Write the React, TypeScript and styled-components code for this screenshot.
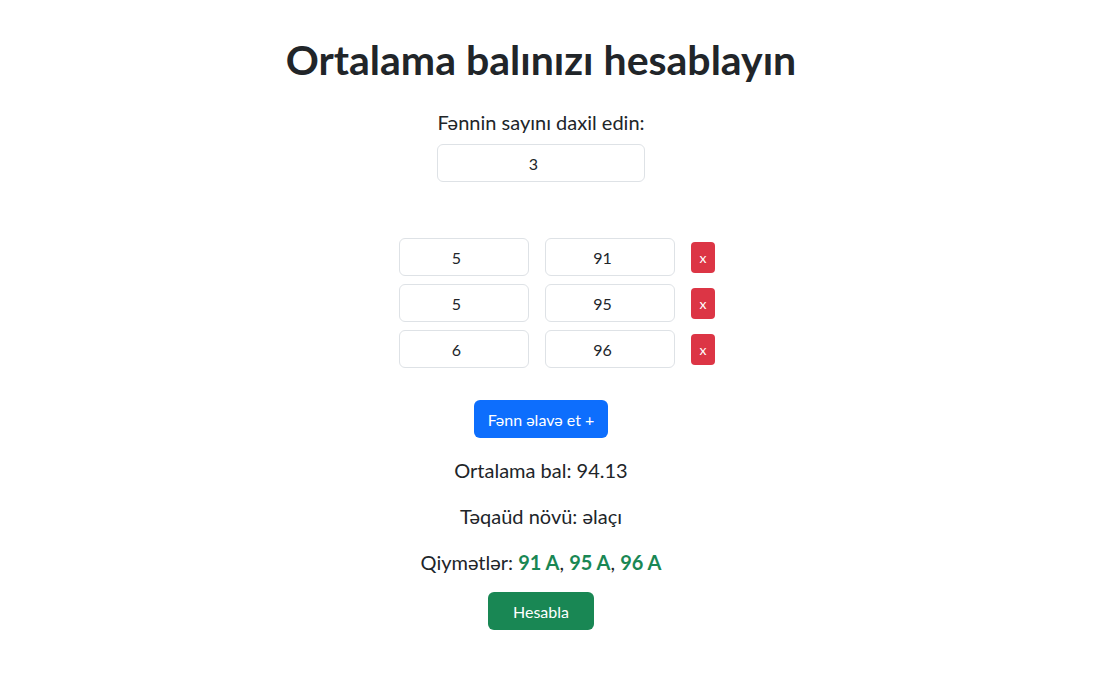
import React, { useState } from "react";
import styled, { createGlobalStyle } from "styled-components";

const GlobalStyle = createGlobalStyle`
  html, body {
    margin: 0;
    padding: 0;
    background: #ffffff;
  }
  body {
    font-family: Lato, "Liberation Sans", sans-serif;
    color: #212529;
  }
  * { box-sizing: border-box; }
`;

const Page = styled.main`
  width: 1082px;
  display: flex;
  flex-direction: column;
  align-items: center;
  padding-top: 35px;
  padding-bottom: 40px;
`;

const Title = styled.h1`
  font-size: 41px;
  line-height: 1.2;
  font-weight: 700;
  margin: 0 0 23px;
  color: #212529;
`;

const Label = styled.label`
  font-size: 20px;
  line-height: 30px;
  margin: 0 0 7px;
`;

const Field = styled.input<{ $w: number }>`
  width: ${(p) => p.$w}px;
  height: 38px;
  border: 1px solid #dee2e6;
  border-radius: 6px;
  background: #fff;
  text-align: center;
  font-family: inherit;
  font-size: 16px;
  color: #212529;
  padding: 6px 12px;
  outline: none;
`;

const Rows = styled.div`
  margin-top: 56px;
  display: flex;
  flex-direction: column;
  gap: 8px;
  padding-left: 32px;
`;

const Row = styled.div`
  display: flex;
  align-items: center;
  gap: 16px;
`;

const Button = styled.button<{ $bg: string; $w: number; $h: number; $fs: number; $r: number }>`
  width: ${(p) => p.$w}px;
  height: ${(p) => p.$h}px;
  background: ${(p) => p.$bg};
  border: none;
  border-radius: ${(p) => p.$r}px;
  color: #fff;
  font-family: inherit;
  font-size: ${(p) => p.$fs}px;
  padding: 0;
  display: inline-flex;
  align-items: center;
  justify-content: center;
  cursor: pointer;
`;

const AddWrap = styled.div`
  margin: 32px 0 17px;
`;

const Info = styled.p`
  font-size: 20px;
  line-height: 30px;
  margin: 0 0 16px;
`;

const Grade = styled.strong`
  color: #198754;
  font-weight: 700;
`;

const CalcWrap = styled.div`
  margin-top: -1px;
`;

type Subject = { credit: string; score: string };

export default function App() {
  const [count, setCount] = useState("3");
  const [subjects, setSubjects] = useState<Subject[]>([
    { credit: "5", score: "91" },
    { credit: "5", score: "95" },
    { credit: "6", score: "96" },
  ]);

  const update = (i: number, key: keyof Subject, v: string) =>
    setSubjects((s) => s.map((x, j) => (j === i ? { ...x, [key]: v } : x)));

  return (
    <>
      <GlobalStyle />
      <Page>
        <Title>Ortalama balınızı hesablayın</Title>
        <Label htmlFor="count">Fənnin sayını daxil edin:</Label>
        <Field id="count" type="number" $w={208} value={count} onChange={(e) => setCount(e.target.value)} />
        <Rows>
          {subjects.map((s, i) => (
            <Row key={i}>
              <Field type="number" $w={130} value={s.credit} onChange={(e) => update(i, "credit", e.target.value)} />
              <Field type="number" $w={130} value={s.score} onChange={(e) => update(i, "score", e.target.value)} />
              <Button $bg="#dc3545" $w={24} $h={31} $fs={14} $r={4}
                onClick={() => setSubjects((all) => all.filter((_, j) => j !== i))}>
                x
              </Button>
            </Row>
          ))}
        </Rows>
        <AddWrap>
          <Button $bg="#0d6efd" $w={134} $h={38} $fs={16} $r={6}
            onClick={() => setSubjects((s) => [...s, { credit: "", score: "" }])}>
            Fənn əlavə et +
          </Button>
        </AddWrap>
        <Info>Ortalama bal: 94.13</Info>
        <Info>Təqaüd növü: əlaçı</Info>
        <Info>
          Qiymətlər: <Grade>91 A</Grade>, <Grade>95 A</Grade>, <Grade>96 A</Grade>
        </Info>
        <CalcWrap>
          <Button $bg="#198754" $w={106} $h={38} $fs={16} $r={6}>Hesabla</Button>
        </CalcWrap>
      </Page>
    </>
  );
}
